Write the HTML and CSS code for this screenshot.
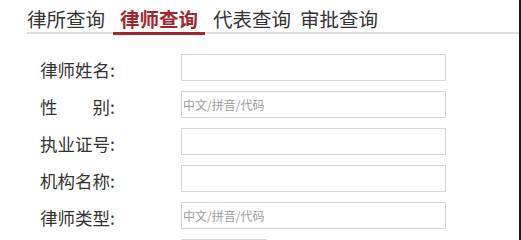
FILE: index.html
```html
<!DOCTYPE html>
<html lang="zh-CN">
<head>
<meta charset="utf-8">
<title>律师查询</title>
<link rel="stylesheet" href="styles.css">
</head>
<body>
<div class="page">
  <nav class="tabs">
    <span class="tab">律所查询</span>
    <span class="tab active">律师查询</span>
    <span class="tab">代表查询</span>
    <span class="tab last">审批查询</span>
  </nav>
  <form class="form">
    <div class="row">
      <label class="label">律师姓名:</label>
      <input class="field" type="text">
    </div>
    <div class="row">
      <label class="label">性&emsp;&emsp;别:</label>
      <input class="field" type="text" placeholder="中文/拼音/代码">
    </div>
    <div class="row">
      <label class="label">执业证号:</label>
      <input class="field" type="text">
    </div>
    <div class="row">
      <label class="label">机构名称:</label>
      <input class="field" type="text">
    </div>
    <div class="row">
      <label class="label">律师类型:</label>
      <input class="field" type="text" placeholder="中文/拼音/代码">
    </div>
    <div class="row">
      <span class="label"></span>
      <span class="btn"></span>
    </div>
  </form>
</div>
</body>
</html>
```
FILE: styles.css
```css
html, body {
  margin: 0;
  padding: 0;
  background: #fff;
  overflow: hidden;
}
body {
  font-family: "Noto Sans CJK SC", "Noto Sans", sans-serif;
  color: #333;
}
.page {
  width: 519px;
  height: 240px;
  border-right: 2px solid #1a1a1a;
  overflow: hidden;
}
.tabs {
  display: flex;
  align-items: flex-end;
  gap: 8px;
  margin-left: 27px;
  padding-top: 6px;
  border-bottom: 2px solid #dedede;
}
.tab {
  font-size: 19.5px;
  line-height: 26px;
  height: 26px;
  color: #333;
  white-space: nowrap;
}
.tab.active {
  color: #a3262d;
  font-weight: 700;
  padding: 0 7px;
  border-bottom: 3px solid #a3262d;
  margin-bottom: -3px;
}
.tab.last {
  margin-left: 1px;
}
.form {
  display: flex;
  flex-direction: column;
  gap: 10px;
  margin: 20px 0 0 40px;
}
.row {
  display: flex;
  align-items: center;
  height: 27px;
}
.label {
  width: 141px;
  flex: none;
  font-size: 17.5px;
  line-height: 27px;
  padding-top: 3px;
  color: #333;
  white-space: nowrap;
}
.field {
  box-sizing: border-box;
  width: 265px;
  height: 27px;
  margin: 0;
  padding: 0 1px;
  border: 1px solid #d6d6d6;
  border-radius: 0;
  outline: none;
  font-family: "Noto Sans CJK SC", sans-serif;
  font-size: 12px;
  color: #333;
  background: #fff;
}
.field::placeholder {
  color: #9c9c9c;
}
.btn {
  box-sizing: border-box;
  width: 86px;
  height: 27px;
  border: 1px solid #d6d6d6;
}
```
